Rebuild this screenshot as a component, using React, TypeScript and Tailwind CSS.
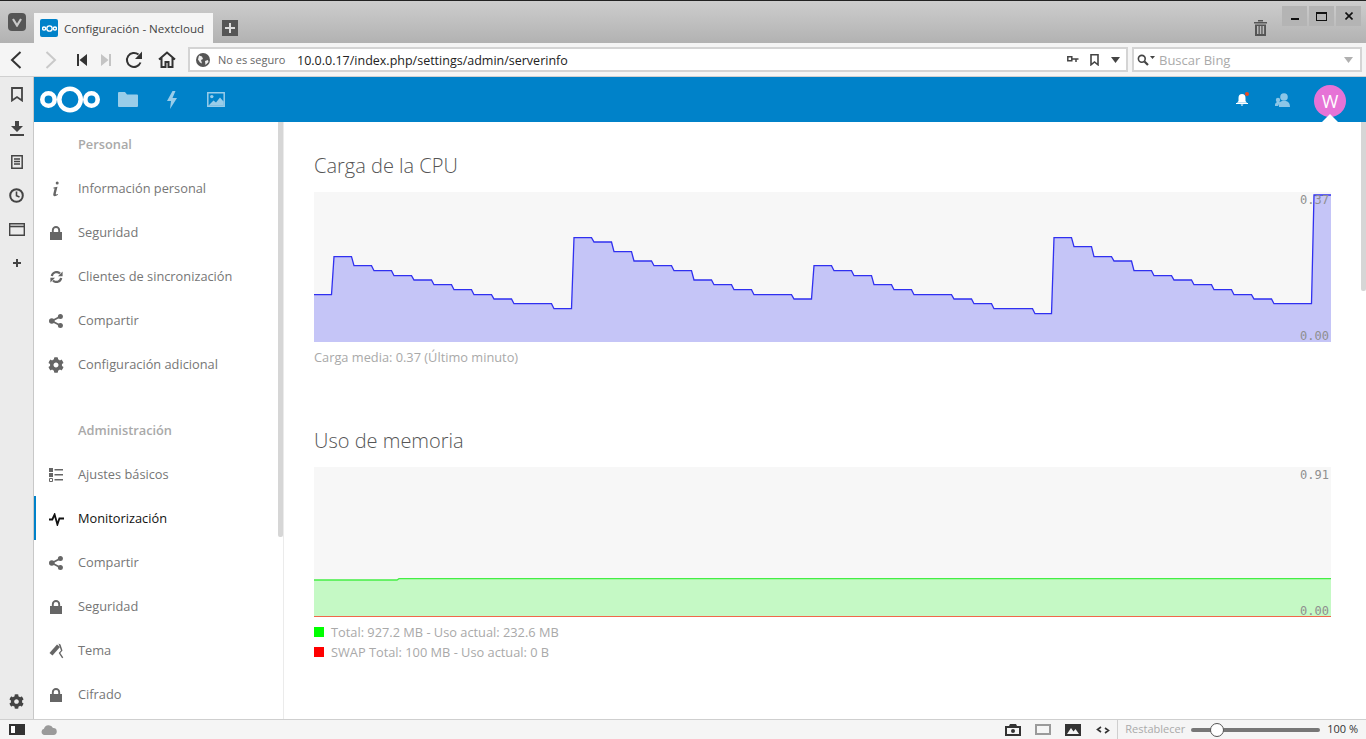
import React from "react";
import { FaCog } from "react-icons/fa";

const uiFont = { fontFamily: '"Open Sans", "Noto Sans", sans-serif' };

// [x where the step lands, y] in page pixels, read off the reference
const cpuSteps: [number, number][] = [
  [334, 256.7], [354, 265.7], [374, 270.7], [394, 275.7], [414, 280], [434, 284.7], [454, 289.7], [474, 294.7],
  [494, 299], [514, 303.7], [554, 308.7], [574, 237.7], [594, 242], [614, 251.7], [634, 261], [654, 265.7],
  [674, 270.7], [694, 280], [714, 284.7], [734, 289.7], [754, 294.7], [794, 299], [814, 265.7], [834, 270.7],
  [854, 275.7], [874, 284.7], [894, 289.7], [914, 294.7], [954, 299], [974, 303.7], [994, 308.7], [1035, 313.7],
  [1054, 237.7], [1074, 246.7], [1094, 256.7], [1114, 261], [1134, 270.7], [1154, 275.7], [1174, 280], [1194, 284.7],
  [1214, 289.7], [1234, 294.7], [1254, 299], [1274, 303.7], [1314, 195],
];

const buildCpuLine = () => {
  let y = 294.7 - 192;
  let d = `M0 ${y}`;
  cpuSteps.forEach(([px, py]) => {
    const x = px - 314;
    const ny = py - 192;
    d += ` L${x - 2.5} ${y} L${x} ${ny}`;
    y = ny;
  });
  return d + ` L1017 ${y}`;
};

const Lock = () => (
  <svg width="12" height="14" viewBox="0 0 12 14" fill="#666">
    <path d="M0 6h12v8H0z" />
    <path d="M2.8 7V4.2a3.2 3.2 0 0 1 6.4 0V7" fill="none" stroke="#666" strokeWidth="1.9" />
  </svg>
);

const Share = () => (
  <svg width="14" height="14" viewBox="0 0 14 14" fill="#666">
    <circle cx="2.8" cy="7" r="2.8" />
    <circle cx="11.4" cy="2.5" r="2.5" />
    <circle cx="11.4" cy="11.5" r="2.5" />
    <path d="M2.8 7l8.6-4.5M2.8 7l8.6 4.5" stroke="#666" strokeWidth="1.8" />
  </svg>
);

const InfoIcon = () => (
  <svg width="10" height="16" viewBox="0 0 10 16" fill="#666">
    <circle cx="6.2" cy="2" r="1.5" />
    <path d="M2.5 6.5L6.5 5.8L4.8 12.5Q4.6 14 6.8 13L7 13.8Q4.6 15.6 2.8 15Q1.8 14.4 2.4 12.6L3.6 7.6L2.4 7.4z" />
  </svg>
);

const SyncIcon = () => (
  <svg width="13" height="12" viewBox="0 0 13 12" fill="none" stroke="#666" strokeWidth="2.2">
    <path d="M1.8 5A4.8 4.8 0 0 1 10 2.6" />
    <path d="M11.2 7A4.8 4.8 0 0 1 3 9.4" />
    <path d="M12.6 .6v4.6H8zM.4 11.4V6.8H5z" fill="#666" stroke="none" />
  </svg>
);

const ListIcon = () => (
  <svg width="14" height="14" viewBox="0 0 14 14" fill="#666">
    <path d="M0 0h4v4H0z" />
    <path d="M0 5h4v4H0z" />
    <path d="M.5 10.5h3v3h-3z" fill="none" stroke="#666" />
    <path d="M5.5 1h8.5v1.6H5.5zM5.5 6h8.5v1.6H5.5zM5.5 11h8.5v1.6H5.5z" />
  </svg>
);

const ActivityIcon = () => (
  <svg width="15" height="13" viewBox="0 0 15 13" fill="none" stroke="#111" strokeWidth="1.8">
    <path d="M0 6.5h3.3L5.6 1.5l2.8 10L10.4 5.5H15" />
  </svg>
);

const RollerIcon = () => (
  <svg width="15" height="16" viewBox="0 0 15 16" fill="#666">
    <path d="M.5 10L8 1.5l3 2.5-7.5 8.5z" />
    <path d="M9.5.5l2 1 2 6-2.2 2.5 3 4.5-1.2.8-3.4-5.3 2.3-2.5-1.8-5z" />
  </svg>
);

const NextcloudLogo = () => (
  <svg width="60" height="27" viewBox="0 0 60 27" fill="none" stroke="#fff" strokeWidth="4.6">
    <circle cx="8.5" cy="13.5" r="6.2" />
    <circle cx="30" cy="13.5" r="10.7" />
    <circle cx="51.5" cy="13.5" r="6.2" />
  </svg>
);

const TabIcon = () => (
  <svg width="15" height="7" viewBox="0 0 60 27" fill="none" stroke="#fff" strokeWidth="5.5">
    <circle cx="8.5" cy="13.5" r="6.2" />
    <circle cx="30" cy="13.5" r="10.7" />
    <circle cx="51.5" cy="13.5" r="6.2" />
  </svg>
);

const navPersonal = [
  { label: "Información personal", icon: <InfoIcon /> },
  { label: "Seguridad", icon: <Lock /> },
  { label: "Clientes de sincronización", icon: <SyncIcon /> },
  { label: "Compartir", icon: <Share /> },
  { label: "Configuración adicional", icon: <FaCog size={16} color="#666" /> },
];

const navAdmin = [
  { label: "Ajustes básicos", icon: <ListIcon /> },
  { label: "Monitorización", icon: <ActivityIcon />, active: true },
  { label: "Compartir", icon: <Share /> },
  { label: "Seguridad", icon: <Lock /> },
  { label: "Tema", icon: <RollerIcon /> },
  { label: "Cifrado", icon: <Lock /> },
];

const NavRow = ({ label, icon, active }: { label: string; icon: React.ReactNode; active?: boolean }) => (
  <div
    className={`flex h-[44px] shrink-0 items-center border-l-2 pt-[2px] text-[12.8px] ${
      active ? "border-[#0082c9] text-[#111]" : "border-transparent text-[#767676]"
    }`}
  >
    <div className="flex w-[40px] shrink-0 justify-center">{icon}</div>
    <span className="ml-[2px]">{label}</span>
  </div>
);

const NavHeading = ({ label }: { label: string }) => (
  <div className="flex h-[44px] shrink-0 items-center pl-[44px] pt-[2px] text-[12.8px] font-semibold text-[#a9a9a9]">{label}</div>
);

const ChartLabel = ({ value, className }: { value: string; className: string }) => (
  <span
    className={`absolute right-[2px] text-[12px] leading-[14px] text-[#8f8f8f] ${className}`}
    style={{ fontFamily: '"DejaVu Sans Mono", monospace' }}
  >
    {value}
  </span>
);

const Toolbar = () => (
  <div className="flex h-[33px] shrink-0 items-center bg-[#f5f5f5]">
    <div className="flex h-full w-[32px] items-center justify-center">
      <svg width="12" height="18" viewBox="0 0 12 18" fill="none" stroke="#333" strokeWidth="2"><path d="M10.5 1L2 9l8.5 8" /></svg>
    </div>
    <div className="ml-[3px] flex h-full w-[32px] items-center justify-center">
      <svg width="12" height="18" viewBox="0 0 12 18" fill="none" stroke="#c9c9c9" strokeWidth="2"><path d="M1.5 1L10 9l-8.5 8" /></svg>
    </div>
    <div className="ml-[3px] flex h-full w-[24px] items-center justify-center">
      <svg width="10" height="12" viewBox="0 0 10 12" fill="#333"><path d="M0 0h2v12H0zM10 0v12L2.5 6z" /></svg>
    </div>
    <div className="flex h-full w-[24px] items-center justify-center">
      <svg width="10" height="12" viewBox="0 0 10 12" fill="#c4c4c4"><path d="M8 0h2v12H8zM0 0v12l7.5-6z" /></svg>
    </div>
    <div className="flex h-full w-[32px] items-center justify-center">
      <svg width="18" height="18" viewBox="0 0 18 18" fill="none" stroke="#333" strokeWidth="2">
        <path d="M15.5 11.5A7 7 0 1 1 13.5 3.6" />
        <path d="M17 .5V8h-7z" fill="#333" stroke="none" />
      </svg>
    </div>
    <div className="flex h-full w-[34px] items-center justify-center">
      <svg width="18" height="17" viewBox="0 0 18 17" fill="none" stroke="#333" strokeWidth="2">
        <path d="M1 8.5L9 1.5l8 7M3.5 7v9h4v-5h3v5h4V7" />
      </svg>
    </div>
    <div className="ml-[4px] flex h-[25px] flex-1 items-center border-2 border-[#d4d4d4] bg-white">
      <div className="flex w-[26px] justify-center">
        <svg width="14" height="14" viewBox="0 0 14 14">
          <circle cx="7" cy="7" r="7" fill="#555" />
          <path d="M3 2.5l3 1 1 2.5-2 1 1 3.5-2-1-2-3zM9 8l3-1 .5 2-3 3z" fill="#eee" />
        </svg>
      </div>
      <span className="ml-[2px] w-[79px] pt-[2px] text-[11px] text-[#666]">No es seguro</span>
      <span className="pt-[3px] text-[12.5px] text-[#222]">10.0.0.17/index.php/settings/admin/serverinfo</span>
      <div className="ml-auto flex items-center">
        <svg width="12" height="7" viewBox="0 0 12 7" fill="none" stroke="#444" strokeWidth="1.5">
          <path d="M.8.8h4v4h-4zM5 3h6.5M9 3v3" />
        </svg>
        <svg className="ml-[11px]" width="9" height="12" viewBox="0 0 9 12" fill="none" stroke="#444" strokeWidth="1.6">
          <path d="M1 .8h7v10L4.5 8 1 10.8z" />
        </svg>
        <svg className="ml-[12px] mr-[6px]" width="9" height="6" viewBox="0 0 9 6" fill="#444"><path d="M0 0h9L4.5 6z" /></svg>
      </div>
    </div>
    <div className="mx-[4px] flex h-[25px] w-[230px] items-center border-2 border-[#d4d4d4] bg-white">
      <svg className="ml-[3px]" width="19" height="12" viewBox="0 0 19 12" fill="none" stroke="#444" strokeWidth="1.6">
        <circle cx="4.8" cy="4.8" r="3.4" />
        <path d="M7.5 7.5L11 11" strokeWidth="2.2" />
        <path d="M13 2h5l-2.5 3z" fill="#444" stroke="none" />
      </svg>
      <span className="ml-[3px] pt-[2px] text-[13px] text-[#aaa]">Buscar Bing</span>
      <svg className="ml-auto mr-[7px]" width="9" height="6" viewBox="0 0 9 6" fill="#b0b0b0"><path d="M0 0h9L4.5 6z" /></svg>
    </div>
  </div>
);

const TitleBar = () => (
  <div className="relative flex h-[43px] shrink-0 border-t border-[#222] bg-gradient-to-b from-[#cdcdcd] to-[#b2b2b2] pl-[8px]">
    <div className="mt-[12px] flex h-[18px] w-[18px] items-center justify-center rounded-[4px] bg-[#565656]">
      <svg width="10" height="9" viewBox="0 0 10 9" fill="none" stroke="#c9c9c9" strokeWidth="2.2"><path d="M1 1l4 6.5L9 1" /></svg>
    </div>
    <div className="ml-[8px] mt-[12px] flex h-[30px] w-[179px] items-center bg-[#f5f5f5] pl-[6px]">
      <div className="flex h-[18px] w-[18px] items-center justify-center rounded-[2px] bg-[#0082c9]">
        <TabIcon />
      </div>
      <span className="ml-[6px] pt-[2px] text-[11.6px] text-[#444]">Configuración - Nextcloud</span>
    </div>
    <div className="ml-[9px] mt-[19px] flex h-[16px] w-[16px] items-center justify-center bg-[#565656]">
      <svg width="10" height="10" viewBox="0 0 10 10" fill="#ddd"><path d="M4 0h2v4h4v2H6v4H4V6H0V4h4z" /></svg>
    </div>
    <div className="ml-auto mr-[5px] flex">
      <svg className="mr-[15px] mt-[19px]" width="13" height="16" viewBox="0 0 13 16" fill="#555">
        <path d="M0 2h13v1.5H0zM4 0h5v1.5H4zM1 4.5h11V16H1zM3 6v8h1.5V6zm2.8 0v8h1.5V6zM8.6 6v8h1.5V6z" fillRule="evenodd" />
      </svg>
      <div className="mt-[5px] flex h-[20px] w-[25px] items-end justify-center bg-[#b4b4b4] pb-[6px]">
        <div className="h-[2px] w-[8px] bg-[#111]" />
      </div>
      <div className="ml-[2px] mt-[5px] flex h-[20px] w-[25px] items-center justify-center bg-[#b4b4b4]">
        <div className="h-[9px] w-[11px] border border-t-2 border-[#111]" />
      </div>
      <div className="ml-[2px] mt-[5px] flex h-[20px] w-[25px] items-center justify-center bg-[#b4b4b4]">
        <svg width="8" height="8" viewBox="0 0 8 8" stroke="#111" strokeWidth="1.6"><path d="M.5.5l7 7M7.5.5l-7 7" /></svg>
      </div>
    </div>
  </div>
);

const SidePanel = () => (
  <div className="flex w-[34px] shrink-0 flex-col items-center border-r border-[#c8c8c8] bg-[#ebebeb]">
    <div className="flex h-[34px] items-center justify-center">
      <svg width="12" height="15" viewBox="0 0 12 15" fill="none" stroke="#444" strokeWidth="1.8"><path d="M1 1h10v12.5L6 10l-5 3.5z" /></svg>
    </div>
    <div className="flex h-[34px] items-center justify-center">
      <svg width="14" height="15" viewBox="0 0 14 15" fill="#444"><path d="M5 0h4v5h4L7 11 1 5h4zM0 13h14v2H0z" /></svg>
    </div>
    <div className="flex h-[33px] items-center justify-center">
      <svg width="12" height="14" viewBox="0 0 12 14" fill="none" stroke="#444" strokeWidth="1.5">
        <path d="M.8.8h10.4v12.4H.8zM3 4h6M3 6.5h6M3 9h6" />
      </svg>
    </div>
    <div className="flex h-[34px] items-center justify-center">
      <svg width="15" height="15" viewBox="0 0 15 15" fill="none" stroke="#444" strokeWidth="2">
        <circle cx="7.5" cy="7.5" r="6.3" />
        <path d="M7.5 3.5v4.2l3 1.3" strokeWidth="1.6" />
      </svg>
    </div>
    <div className="flex h-[34px] items-center justify-center">
      <svg width="16" height="13" viewBox="0 0 16 13" fill="none" stroke="#444" strokeWidth="1.4">
        <path d="M.7.7h14.6v11.6H.7z" />
        <path d="M0 3.5h16" strokeWidth="1.6" />
      </svg>
    </div>
    <div className="flex h-[34px] items-center justify-center">
      <svg width="8" height="8" viewBox="0 0 8 8" fill="#444"><path d="M3 0h2v3h3v2H5v3H3V5H0V3h3z" /></svg>
    </div>
    <div className="mb-[10px] mt-auto">
      <FaCog size={15} color="#444" />
    </div>
  </div>
);

const CloudHeader = () => (
  <div className="flex h-[45px] shrink-0 items-center bg-[#0082c9] pl-[6px]">
    <NextcloudLogo />
    <svg className="ml-[18px]" width="20" height="15" viewBox="0 0 20 15" fill="#fff" fillOpacity="0.6">
      <path d="M1 0h6l2 2.5h10q1 0 1 1V14q0 1-1 1H1q-1 0-1-1V1q0-1 1-1z" />
    </svg>
    <svg className="ml-[28px]" width="12" height="18" viewBox="0 0 12 18" fill="#fff" fillOpacity="0.6">
      <path d="M6.5 0L1 10h4l-1 8 7-11H6.5l3-7z" />
    </svg>
    <svg className="ml-[29px]" width="18" height="15" viewBox="0 0 18 15" fill="none" stroke="#fff" strokeOpacity="0.6" strokeWidth="1.5">
      <path d="M.8.8h16.4v13.4H.8z" />
      <circle cx="4.8" cy="4.6" r="1.7" fill="#fff" fillOpacity="0.6" stroke="none" />
      <path d="M1.5 13.5l5-5 2.5 2 4-5 3.5 4v4z" fill="#fff" fillOpacity="0.6" stroke="none" />
    </svg>
    <div className="relative ml-auto mr-[118px]">
      <svg width="12" height="13" viewBox="0 0 12 13" fill="#fff">
        <path d="M6 1Q2.5 1 2.5 5v3L1 9.8h10L9.5 8V5Q9.5 1 6 1zM0 10h12v1H0zM4.5 11.5h3L6 13z" />
      </svg>
      <div className="absolute -right-[1px] -top-[1px] h-[4px] w-[4px] rounded-full bg-[#e9481f]" />
    </div>
    <svg className="absolute left-[1275px]" width="15" height="14" viewBox="0 0 15 14" fill="#fff" fillOpacity="0.55">
      <circle cx="9" cy="4" r="3.8" />
      <path d="M4 14q-1-5 3-6h4q4 1 4 6z" />
      <circle cx="3" cy="7" r="2.2" />
      <path d="M0 13q-.5-3 2-4h3l-2 4z" />
    </svg>
    <div className="absolute left-[1314px] top-[85px] flex h-[32px] w-[32px] items-center justify-center rounded-full bg-[#e673d6] text-[18px] text-white">
      W
    </div>
    <div className="absolute left-[1322px] top-[114px] h-0 w-0 border-x-[8px] border-b-[8px] border-x-transparent border-b-white" />
  </div>
);

const Sidebar = () => (
  <div className="relative flex w-[250px] shrink-0 flex-col overflow-hidden border-r border-[#ebebeb]">
    <NavHeading label="Personal" />
    {navPersonal.map((item) => (
      <NavRow key={item.label} {...item} />
    ))}
    <div className="h-[22px] shrink-0" />
    <NavHeading label="Administración" />
    {navAdmin.map((item) => (
      <NavRow key={item.label} {...item} />
    ))}
    <div className="absolute right-0 top-0 h-[415px] w-[5px] rounded-b-[2px] bg-[#d6d6d6]" />
  </div>
);

const Content = () => (
  <div className="relative flex-1 overflow-hidden pl-[30px] pr-[35px] pt-[30px]">
    <h2 className="text-[20px] font-light leading-[28px] text-[#555]">Carga de la CPU</h2>
    <div className="relative mt-[12px] h-[150px] bg-[#f7f7f7]">
      <svg className="block" width="1017" height="150" viewBox="0 0 1017 150">
        <path d={`${buildCpuLine()} L1017 150 L0 150 Z`} fill="#c5c5f7" />
        <path d={buildCpuLine()} fill="none" stroke="#3030f0" strokeWidth="1.3" />
      </svg>
      <ChartLabel value="0.37" className="top-[1px]" />
      <ChartLabel value="0.00" className="bottom-[-1px]" />
    </div>
    <p className="mt-[7px] text-[12.8px] leading-[16px] text-[#a9a9a9]">Carga media: 0.37 (Último minuto)</p>
    <h2 className="mt-[62px] text-[20px] font-light leading-[28px] text-[#555]">Uso de memoria</h2>
    <div className="relative mt-[12px] h-[150px] bg-[#f7f7f7]">
      <svg className="block" width="1017" height="150" viewBox="0 0 1017 150">
        <path d="M0 113 L83 113 L85 111.7 L1017 111.7 L1017 150 L0 150 Z" fill="#c5f9c5" />
        <path d="M0 113 L83 113 L85 111.7 L1017 111.7" fill="none" stroke="#45ee45" strokeWidth="1.3" />
        <path d="M0 149.5 L1017 149.5" fill="none" stroke="#f0684a" strokeWidth="1" />
      </svg>
      <ChartLabel value="0.91" className="top-[1px]" />
      <ChartLabel value="0.00" className="bottom-[-1px]" />
    </div>
    <div className="mt-[5px] text-[12.8px] text-[#a9a9a9]">
      <div className="flex h-[20px] items-center">
        <div className="mr-[7px] h-[10px] w-[10px] bg-[#00ff00]" />
        <span className="pt-[2px]">Total: 927.2 MB - Uso actual: 232.6 MB</span>
      </div>
      <div className="flex h-[20px] items-center">
        <div className="mr-[7px] h-[10px] w-[10px] bg-[#ff0000]" />
        <span className="pt-[2px]">SWAP Total: 100 MB - Uso actual: 0 B</span>
      </div>
    </div>
    <div className="absolute right-0 top-0 h-[169px] w-[5px] rounded-b-[2px] bg-[#d6d6d6]" />
  </div>
);

const StatusBar = () => (
  <div className="flex h-[20px] shrink-0 items-center border-t border-[#cfcfcf] bg-[#f5f5f5] pl-[9px]">
    <div className="flex h-[11px] w-[16px] border-2 border-[#333] bg-[#333]">
      <div className="h-full w-[4px] bg-white" />
    </div>
    <svg className="ml-[16px]" width="16" height="10" viewBox="0 0 16 10" fill="#9a9a9a">
      <path d="M3.5 10a3.2 3.2 0 0 1-.5-6.3A4.8 4.8 0 0 1 12 3a3.5 3.5 0 0 1 .5 7z" />
    </svg>
    <svg className="ml-auto" width="16" height="13" viewBox="0 0 16 13" fill="#333">
      <path d="M0 3h4l1-2h6l1 2h4v10H0zM2 5v6h12V5z" fillRule="evenodd" />
      <circle cx="8" cy="8" r="2" />
    </svg>
    <div className="ml-[14px] h-[11px] w-[16px] border-2 border-[#9a9a9a]" />
    <svg className="ml-[14px]" width="16" height="12" viewBox="0 0 16 12" fill="#333">
      <path d="M0 0h16v12H0zM2 10h12L10.5 5 8.5 7.5 6 4z" fillRule="evenodd" />
    </svg>
    <svg className="ml-[15px]" width="14" height="8" viewBox="0 0 14 8" fill="none" stroke="#333" strokeWidth="1.6">
      <path d="M5 1L1.5 3.5 5 6M9 2l3.5 2.5L9 7" />
    </svg>
    <div className="ml-[7px] h-[20px] border-l border-[#cfcfcf]" />
    <span className="ml-[7px] text-[11px] text-[#aaa]">Restablecer</span>
    <div className="relative ml-[6px] h-[4px] w-[129px] rounded-full bg-[#777]">
      <div className="absolute left-[19px] top-[-5px] h-[14px] w-[14px] rounded-full border border-[#555] bg-white" />
    </div>
    <span className="ml-[7px] mr-[8px] text-[11px] text-[#333]">100 %</span>
  </div>
);

export default function App() {
  return (
    <div className="relative flex h-[739px] w-[1366px] flex-col overflow-hidden bg-white" style={uiFont}>
      <TitleBar />
      <Toolbar />
      <div className="h-px shrink-0 bg-[#d0d0d0]" />
      <div className="flex min-h-0 flex-1">
        <SidePanel />
        <div className="flex min-w-0 flex-1 flex-col">
          <CloudHeader />
          <div className="flex min-h-0 flex-1">
            <Sidebar />
            <Content />
          </div>
        </div>
      </div>
      <StatusBar />
    </div>
  );
}
